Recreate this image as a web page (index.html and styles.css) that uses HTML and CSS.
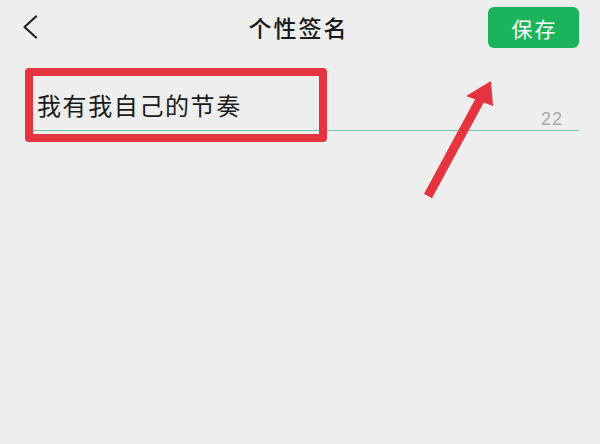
FILE: index.html
```html
<!DOCTYPE html>
<html lang="zh-CN">
<head>
<meta charset="utf-8">
<title>个性签名</title>
<link rel="stylesheet" href="styles.css">
</head>
<body>
<div class="page">
  <header class="nav">
    <div class="nav-left">
      <svg class="back" width="16" height="24" viewBox="0 0 16 24" aria-hidden="true">
        <polyline points="14,1.5 2.5,12 14,22.5" fill="none" stroke="#222" stroke-width="2.2" stroke-linecap="round" stroke-linejoin="round"/>
      </svg>
    </div>
    <h1 class="title">个性签名</h1>
    <div class="nav-right">
      <button class="save">保存</button>
    </div>
  </header>
  <div class="field">
    <div class="value">我有我自己的节奏</div>
    <div class="count">22</div>
  </div>
  <div class="highlight"></div>
  <svg class="arrow" width="600" height="444" viewBox="0 0 600 444" aria-hidden="true">
    <line x1="428" y1="196" x2="481" y2="98" stroke="#e5333f" stroke-width="9" stroke-linecap="butt"/>
    <polygon points="491,81 466,96 493,106" fill="#e5333f"/>
  </svg>
</div>
</body>
</html>
```
FILE: styles.css
```css
html, body {
  margin: 0;
  padding: 0;
  background: #eeeeee;
}
.page {
  position: relative;
  width: 600px;
  height: 444px;
  overflow: hidden;
  font-family: "Noto Sans CJK SC", "Noto Sans", sans-serif;
  color: #1a1a1a;
}
.nav {
  height: 55px;
  display: grid;
  grid-template-columns: 1fr auto 1fr;
  align-items: center;
  padding: 0 21px 0 22px;
}
.nav-left {
  display: flex;
  align-items: center;
}
.back {
  display: block;
  margin-top: -2px;
}
.title {
  margin: 0;
  font-size: 23px;
  font-weight: 500;
  line-height: 30px;
  letter-spacing: 2px;
  color: #1a1a1a;
  margin-top: -2px;
  margin-right: 4px;
}
.nav-right {
  display: flex;
  justify-content: flex-end;
}
.save {
  width: 91px;
  height: 41px;
  border: none;
  border-radius: 6px;
  background: #1bb35b;
  color: #ffffff;
  font-family: inherit;
  font-size: 21px;
  letter-spacing: 2px;
  padding: 0 0 0 2px;
  margin-top: 0;
}
.field {
  margin: 0 21px 0 25px;
  padding: 35px 16px 0 12px;
  display: flex;
  align-items: flex-end;
  justify-content: space-between;
  border-bottom: 1px solid #6cc8a2;
}
.value {
  font-size: 24px;
  line-height: 30px;
  letter-spacing: 1.6px;
  margin-bottom: 10px;
  color: #1a1a1a;
}
.count {
  font-family: "Liberation Sans", "Noto Sans", sans-serif;
  font-size: 18px;
  line-height: 22px;
  color: #a8a8a8;
  letter-spacing: 1px;
}
.highlight {
  position: absolute;
  left: 25px;
  top: 68px;
  width: 302px;
  height: 74px;
  box-sizing: border-box;
  border: 8px solid #e5333f;
  border-radius: 4px;
}
.arrow {
  position: absolute;
  left: 0;
  top: 0;
}
```
